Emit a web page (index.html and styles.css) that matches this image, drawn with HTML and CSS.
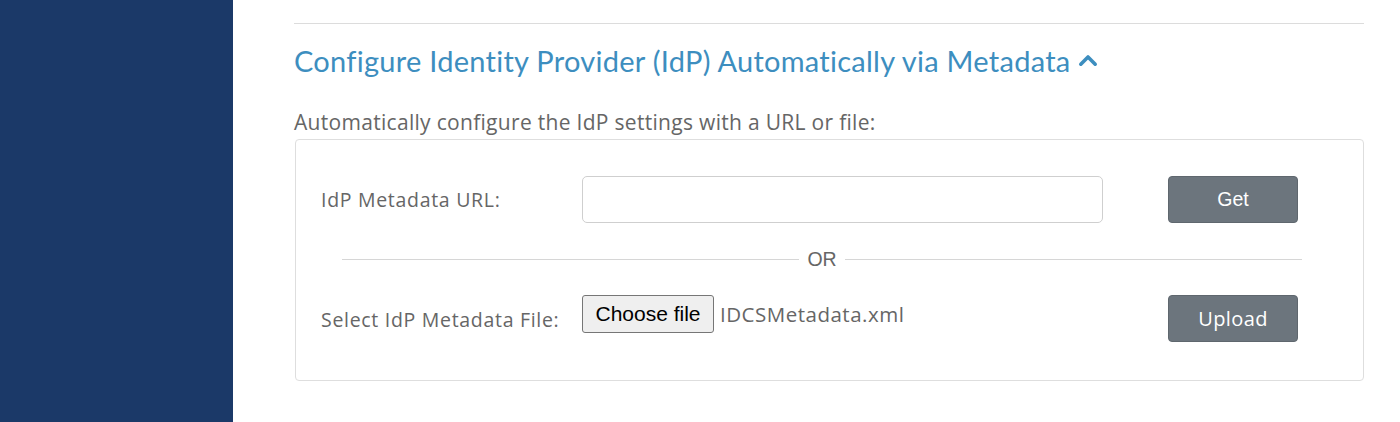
FILE: index.html
```html
<!DOCTYPE html>
<html>
<head>
<meta charset="utf-8">
<link rel="stylesheet" href="styles.css">
</head>
<body>
<div class="layout">
  <aside class="sidebar"></aside>
  <main class="main">
    <hr class="top-rule">
    <h2 class="section-title">Configure Identity Provider (IdP) Automatically via Metadata<svg class="chevron" width="20" height="14" viewBox="0 0 20 14"><path d="M2.8 11.2 L10 4 L17.2 11.2" fill="none" stroke="#3d8ebf" stroke-width="3.6" stroke-linecap="round" stroke-linejoin="round"/></svg></h2>
    <p class="intro">Automatically configure the IdP settings with a URL or file:</p>
    <div class="panel">
      <div class="row row-url">
        <label class="label">IdP Metadata URL:</label>
        <input class="text-input" type="text">
        <button class="btn btn-get">Get</button>
      </div>
      <div class="divider"><span class="line"></span><span class="or">OR</span><span class="line"></span></div>
      <div class="row row-file">
        <label class="label">Select IdP Metadata File:</label>
        <div class="file-field">
          <span class="choose">Choose file</span>
          <span class="filename">IDCSMetadata.xml</span>
        </div>
        <button class="btn btn-upload">Upload</button>
      </div>
    </div>
  </main>
</div>
</body>
</html>
```
FILE: styles.css
```css
html, body {
  margin: 0;
  padding: 0;
  background: #ffffff;
}
.layout {
  display: flex;
  height: 422px;
  overflow: hidden;
}
.sidebar {
  flex: 0 0 233px;
  background: #1b3968;
}
.main {
  flex: 1;
  min-width: 0;
  padding: 0 36px 0 61px;
  font-family: "Open Sans", "Liberation Sans", sans-serif;
}
.top-rule {
  margin: 23px 0 0 0;
  border: 0;
  border-top: 1px solid #dcdcdc;
}
.section-title {
  margin: 17px 0 0 0;
  font-family: "Lato", "Open Sans", sans-serif;
  font-weight: 400;
  font-size: 29px;
  line-height: 40px;
  height: 40px;
  color: #3d8ebf;
  display: flex;
  align-items: center;
  letter-spacing: 0.27px;
}
.chevron {
  margin-left: 7px;
  margin-top: -3px;
}
.intro {
  margin: 29px 0 0 0;
  font-size: 21px;
  line-height: 24px;
  letter-spacing: 0.3px;
  color: #666666;
}
.panel {
  margin: 5px 0 0 1px;
  border: 1px solid #dedede;
  border-radius: 4px;
  height: 242px;
  box-sizing: border-box;
  padding: 36px 65px 0 25px;
}
.row {
  display: flex;
  align-items: center;
}
.label {
  flex: 0 0 261px;
  font-size: 19.5px;
  letter-spacing: 0.7px;
  color: #666666;
}
.text-input {
  width: 521px;
  height: 47px;
  box-sizing: border-box;
  border: 1px solid #cfcfcf;
  border-radius: 5px;
  margin: 0;
}
.btn {
  margin-left: 65px;
  width: 130px;
  height: 47px;
  border: 1px solid #5f676e;
  border-radius: 4px;
  background: #6c757d;
  color: #ffffff;
  font-size: 19.5px;
  font-family: "Liberation Sans", Arial, sans-serif;
  padding: 0;
}
.btn-upload {
  font-family: "Open Sans", sans-serif;
  font-size: 20px;
  letter-spacing: 0.4px;
}
.divider {
  display: flex;
  align-items: center;
  margin: 21px -4px 0 21px;
  height: 30px;
}
.line {
  flex: 1;
  border-top: 1px solid #d6d6d6;
}
.or {
  padding: 0 8px;
  font-family: "Liberation Sans", Arial, sans-serif;
  font-size: 19.5px;
  color: #666666;
}
.row-file {
  margin-top: 21px;
  align-items: flex-start;
}
.row-file .label {
  line-height: 49px;
}
.file-field {
  width: 521px;
  display: flex;
  align-items: center;
  height: 38px;
}
.choose {
  display: inline-block;
  box-sizing: border-box;
  width: 132px;
  height: 38px;
  line-height: 36px;
  text-align: center;
  border: 1px solid #767676;
  border-radius: 3px;
  background: #efefef;
  color: #000;
  font-family: "Liberation Sans", Arial, sans-serif;
  font-size: 21px;
}
.filename {
  margin-left: 6px;
  font-size: 20.5px;
  letter-spacing: 0.5px;
  color: #666666;
}
```
